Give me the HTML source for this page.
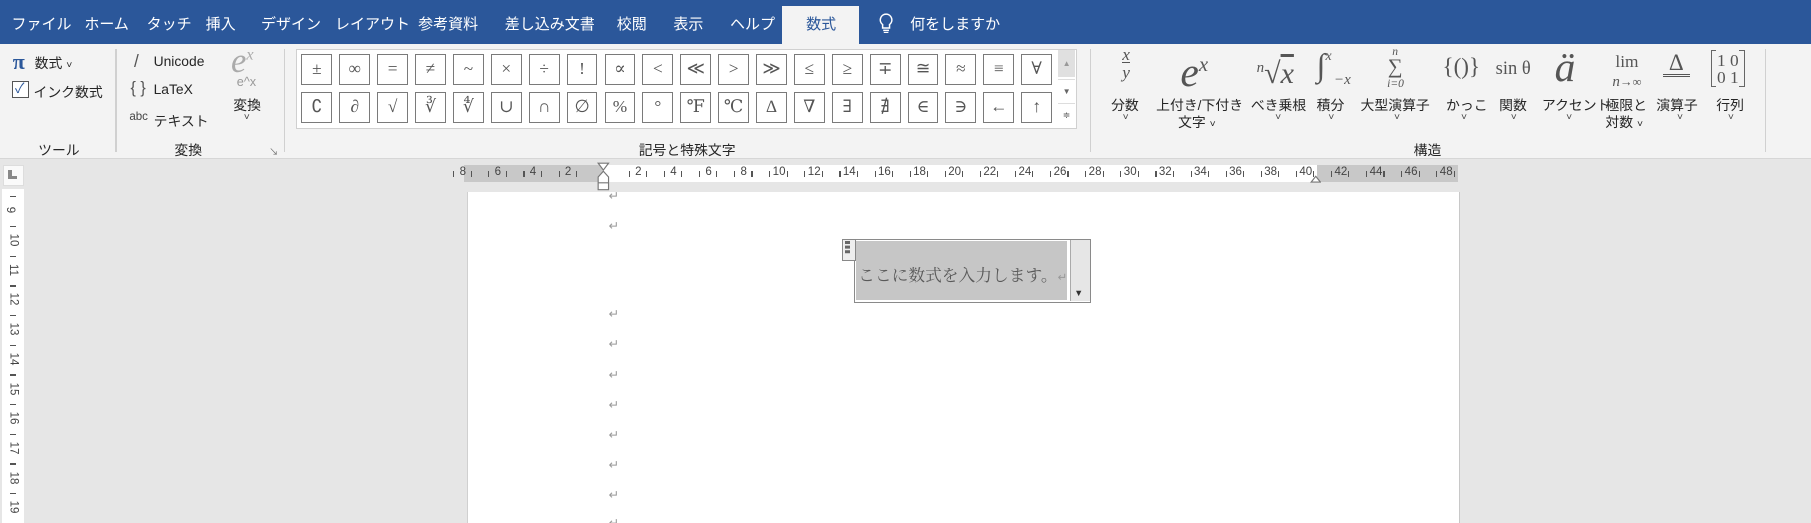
<!DOCTYPE html>
<html><head><meta charset="utf-8">
<style>
html,body{margin:0;padding:0;overflow:hidden;}
body{width:1811px;height:523px;background:#e6e6e6;font-family:"Liberation Sans","Noto Sans CJK JP",sans-serif;}
#w{position:absolute;left:0;top:0;width:1568px;height:453px;zoom:1.15497;overflow:hidden;background:#e6e6e6;}
.a{position:absolute;white-space:nowrap;}
.tab{position:absolute;top:11px;color:#fff;font-size:13px;}
.lbl{position:absolute;font-size:12px;color:#262626;}
.g{position:absolute;width:25px;height:25px;border:1px solid #7a7a7a;background:#fff;font-family:"Liberation Serif","DejaVu Serif",serif;font-size:15px;color:#555;text-align:center;line-height:25px;}
.sep{position:absolute;top:42px;width:1px;height:90px;background:#d0d0d0;}
.ser{font-family:"Liberation Serif","DejaVu Serif",serif;color:#555;}
.chev{position:absolute;font-size:9px;color:#444;}
.ret{position:absolute;left:527px;font-size:11px;color:#999;}
.rn{position:absolute;top:144px;font-size:10px;color:#444;}
.vn{position:absolute;left:6px;font-size:10px;color:#444;transform:rotate(90deg);}
</style></head><body><div id="w">
<div class="a" style="left:0;top:0;width:1568px;height:38px;background:#2b579a;"></div>
<div class="tab" style="left:10px">ファイル</div>
<div class="tab" style="left:73px">ホーム</div>
<div class="tab" style="left:127px">タッチ</div>
<div class="tab" style="left:178px">挿入</div>
<div class="tab" style="left:226px">デザイン</div>
<div class="tab" style="left:290px">レイアウト</div>
<div class="tab" style="left:362px">参考資料</div>
<div class="tab" style="left:437px">差し込み文書</div>
<div class="tab" style="left:534px">校閲</div>
<div class="tab" style="left:583px">表示</div>
<div class="tab" style="left:632px">ヘルプ</div>
<div class="a" style="left:677px;top:5px;width:67px;height:33px;background:#f3f3f3;"></div>
<div class="tab" style="left:698px;color:#2b579a">数式</div>
<svg class="a" style="left:760px;top:11px" width="14" height="18" viewBox="0 0 14 18"><path d="M7 1a5 5 0 0 0-3 9v3h6v-3a5 5 0 0 0-3-9zM4.5 15h5M5 17h4" fill="none" stroke="#fff" stroke-width="1.3"/></svg>
<div class="tab" style="left:788px">何をしますか</div>
<div class="a" style="left:0;top:38px;width:1568px;height:99px;background:#f3f3f3;border-bottom:1px solid #d6d6d6;"></div>
<div class="sep" style="left:100px"></div><div class="sep" style="left:246px"></div><div class="sep" style="left:944px"></div><div class="sep" style="left:1528px"></div>
<div class="lbl" style="left:33px;top:120px">ツール</div>
<div class="lbl" style="left:151px;top:120px">変換</div>
<div class="lbl" style="left:553px;top:120px">記号と特殊文字</div>
<div class="lbl" style="left:1224px;top:120px">構造</div>
<div class="a ser" style="left:11px;top:42px;font-size:19px;color:#2b579a;font-weight:bold">π</div>
<div class="lbl" style="left:30px;top:45px">数式 <span style="font-size:9px">˅</span></div>
<div class="a" style="left:10px;top:70px;width:13px;height:13px;border:1px solid #555;background:#fff"></div>
<div class="a" style="left:13px;top:67px;font-size:12px;color:#2b579a">✓</div>
<div class="lbl" style="left:29px;top:70px">インク数式</div>
<div class="a" style="left:116px;top:44px;font-size:15px;color:#555">/</div>
<div class="lbl" style="left:133px;top:46px">Unicode</div>
<div class="a" style="left:113px;top:68px;font-size:14px;color:#555">{ }</div>
<div class="lbl" style="left:133px;top:70px">LaTeX</div>
<div class="a" style="left:112px;top:96px;font-size:10px;color:#444">abc</div>
<div class="lbl" style="left:133px;top:95px">テキスト</div>
<div class="a ser" style="left:200px;top:36px;font-size:30px;font-style:italic;color:#aaa">e<sup style="font-size:14px">x</sup></div>
<div class="a" style="left:205px;top:65px;font-size:11px;color:#999">e^x</div>
<div class="lbl" style="left:202px;top:81px">変換</div>
<div class="chev" style="left:211px;top:97px">˅</div>
<div class="a" style="left:233px;top:125px;font-size:8px;color:#666">↘</div>
<div class="a" style="left:256px;top:42px;width:675px;height:68px;background:#fff;border:1px solid #d0d0d0"></div>
<div class="a" style="left:916px;top:43px;width:15px;height:24px;background:#e0e0e0;font-size:7px;color:#999;text-align:center;line-height:24px">▲</div>
<div class="a" style="left:916px;top:68px;width:15px;height:20px;font-size:7px;color:#666;text-align:center;line-height:20px;border-top:1px solid #ddd">▼</div>
<div class="a" style="left:916px;top:89px;width:15px;height:20px;font-size:8px;color:#666;text-align:center;line-height:20px;border-top:1px solid #ddd">≑</div>
<div id="gal"></div>
<div class="a ser" style="left:968px;top:40px;font-size:15px;font-style:italic;line-height:15px;text-align:center;width:14px">x<br><span style="border-top:1px solid #555">y</span></div>
<div class="a ser" style="left:1022px;top:36px;font-size:36px;font-style:italic;line-height:40px">e<sup style="font-size:18px">x</sup></div>
<div class="a ser" style="left:1088px;top:44px;font-size:26px;font-style:italic;line-height:30px"><sup style="font-size:13px">n</sup>√<span style="text-decoration:overline">x</span></div>
<div class="a ser" style="left:1140px;top:40px;font-size:28px;line-height:34px">∫<span style="font-size:12px;font-style:italic;position:relative;top:-14px">x</span></div>
<div class="a ser" style="left:1155px;top:62px;font-size:13px;font-style:italic">−x</div>
<div class="a ser" style="left:1201px;top:40px;font-size:10px;font-style:italic;text-align:center;line-height:12px;width:14px">n<br><span style="font-size:18px;font-style:normal">∑</span><br>i=0</div>
<div class="a ser" style="left:1249px;top:46px;font-size:20px">{()}</div>
<div class="a ser" style="left:1295px;top:50px;font-size:16px">sin θ</div>
<div class="a ser" style="left:1346px;top:38px;font-size:36px;font-style:italic;line-height:40px">ä</div>
<div class="a ser" style="left:1396px;top:46px;font-size:15px;text-align:center;line-height:16px">lim<br><i style="font-size:13px">n</i><span style="font-size:11px">→∞</span></div>
<div class="a ser" style="left:1440px;top:44px;font-size:20px;line-height:20px;border-bottom:3px double #555">&nbsp;Δ&nbsp;</div>
<div class="a ser" style="left:1481px;top:43px;width:30px;height:32px;border:1.5px solid #666;border-top-width:1px;border-bottom-width:1px;font-size:15px;line-height:15px;text-align:center;color:#555;box-sizing:border-box;padding-top:1px">1 0<br>0 1</div>
<div class="a" style="left:1486px;top:42px;width:20px;height:34px;background:#f3f3f3"></div>
<div class="a ser" style="left:1484px;top:45px;width:24px;font-size:15px;line-height:15px;text-align:center;color:#555">1 0<br>0 1</div>
<div class="lbl" style="left:962px;top:81px">分数</div><div class="chev" style="left:972px;top:97px">˅</div>
<div class="lbl" style="left:1001px;top:81px">上付き/下付き</div><div class="lbl" style="left:1020px;top:96px">文字 <span style="font-size:9px">˅</span></div>
<div class="lbl" style="left:1083px;top:81px">べき乗根</div><div class="chev" style="left:1104px;top:97px">˅</div>
<div class="lbl" style="left:1140px;top:81px">積分</div><div class="chev" style="left:1150px;top:97px">˅</div>
<div class="lbl" style="left:1178px;top:81px">大型演算子</div><div class="chev" style="left:1207px;top:97px">˅</div>
<div class="lbl" style="left:1252px;top:81px">かっこ</div><div class="chev" style="left:1265px;top:97px">˅</div>
<div class="lbl" style="left:1298px;top:81px">関数</div><div class="chev" style="left:1308px;top:97px">˅</div>
<div class="lbl" style="left:1335px;top:81px">アクセント</div><div class="chev" style="left:1356px;top:97px">˅</div>
<div class="lbl" style="left:1390px;top:81px">極限と</div><div class="lbl" style="left:1390px;top:96px">対数 <span style="font-size:9px">˅</span></div>
<div class="lbl" style="left:1434px;top:81px">演算子</div><div class="chev" style="left:1452px;top:97px">˅</div>
<div class="lbl" style="left:1486px;top:81px">行列</div><div class="chev" style="left:1496px;top:97px">˅</div>
<div class="a" style="left:3px;top:143px;width:16px;height:16px;background:#fafafa;border:1px solid #ddd"></div>
<div class="a" style="left:7px;top:147px;width:3px;height:8px;background:#888"></div><div class="a" style="left:7px;top:152px;width:8px;height:3px;background:#888"></div>
<div class="a" style="left:2px;top:164px;width:19px;height:289px;background:#fff"></div>
<div class="a" style="left:402px;top:143px;width:860px;height:15px;background:#fff"></div>
<div class="a" style="left:402px;top:143px;width:120px;height:15px;background:#c8c8c8"></div>
<div class="a" style="left:1140px;top:143px;width:122px;height:15px;background:#c8c8c8"></div>
<div id="rul"></div>
<svg class="a" style="left:517px;top:140px" width="11" height="26" viewBox="0 0 11 26"><path d="M1 1h9l-4.5 6zM1 13l4.5-5 4.5 5v5H1zM1 18h9v6H1z" fill="#fff" stroke="#777"/></svg>
<svg class="a" style="left:1134px;top:151px" width="10" height="8"><path d="M1 7l4-5 4 5z" fill="#fff" stroke="#777"/></svg>
<div class="a" style="left:404px;top:166px;width:858px;height:290px;background:#fff;border-left:1px solid #d0d0d0;border-right:1px solid #c8c8c8"></div>
<div class="ret" style="top:163px">↵</div><div class="ret" style="top:189px">↵</div><div class="ret" style="top:265px">↵</div><div class="ret" style="top:291px">↵</div><div class="ret" style="top:318px">↵</div><div class="ret" style="top:344px">↵</div><div class="ret" style="top:370px">↵</div><div class="ret" style="top:396px">↵</div><div class="ret" style="top:422px">↵</div><div class="ret" style="top:446px">↵</div>
<div class="a" style="left:739px;top:207px;width:204px;height:54px;border:1px solid #8a8a8a;background:#fff"></div>
<div class="a" style="left:741px;top:209px;width:183px;height:51px;background:#c6c6c6"></div>
<div class="a" style="left:926px;top:208px;width:17px;height:53px;background:#e6e6e6;border-left:1px solid #aaa"></div>
<div class="a" style="left:930px;top:249px;font-size:8px;color:#333">▼</div>
<div class="a" style="left:729px;top:207px;width:10px;height:17px;border:1px solid #888;background:#eee"></div>
<div class="a" style="left:732px;top:209px;width:4px;height:2px;background:#666;box-shadow:0 4px #666,0 8px #666"></div>
<div class="a" style="left:743px;top:227px;font-size:14.5px;color:#595959;font-family:'Liberation Serif','Noto Serif CJK SC',serif">ここに数式を入力します。<span style="font-size:10px;color:#999">↵</span></div>
</div>
<script>
var s1="± ∞ = ≠ ~ × ÷ ! ∝ < ≪ > ≫ ≤ ≥ ∓ ≅ ≈ ≡ ∀".split(" "),s2="∁ ∂ √ ∛ ∜ ∪ ∩ ∅ % ° ℉ ℃ ∆ ∇ ∃ ∄ ∈ ∋ ← ↑".split(" ");
var h="";for(var i=0;i<20;i++){var x=261+i*32.8;h+='<div class="g" style="left:'+x+'px;top:47px">'+s1[i].replace("<","&lt;").replace(">","&gt;")+'</div><div class="g" style="left:'+x+'px;top:80px">'+s2[i]+'</div>';}
document.getElementById("gal").innerHTML=h;
var r="";for(var n=-8;n<=48;n+=2){if(n==0)continue;var x=522+n*15.2;r+='<div class="rn" style="left:'+(x-(Math.abs(n)>9?5:2.5))+'px">'+Math.abs(n)+'</div>';
r+='<div class="a" style="left:'+(x-8)+'px;top:148px;width:1px;height:5px;background:#555"></div><div class="a" style="left:'+(x+7)+'px;top:148px;width:1px;height:5px;background:#555"></div>';}
for(var k=9;k<=19;k++){var y=183+(k-9)*25.7;r+='<div class="vn" style="top:'+(y-6)+'px">'+k+'</div><div class="a" style="left:9px;top:'+(y-13)+'px;width:5px;height:1px;background:#555"></div>';}
document.getElementById("rul").innerHTML=r;
</script>
</body></html>
